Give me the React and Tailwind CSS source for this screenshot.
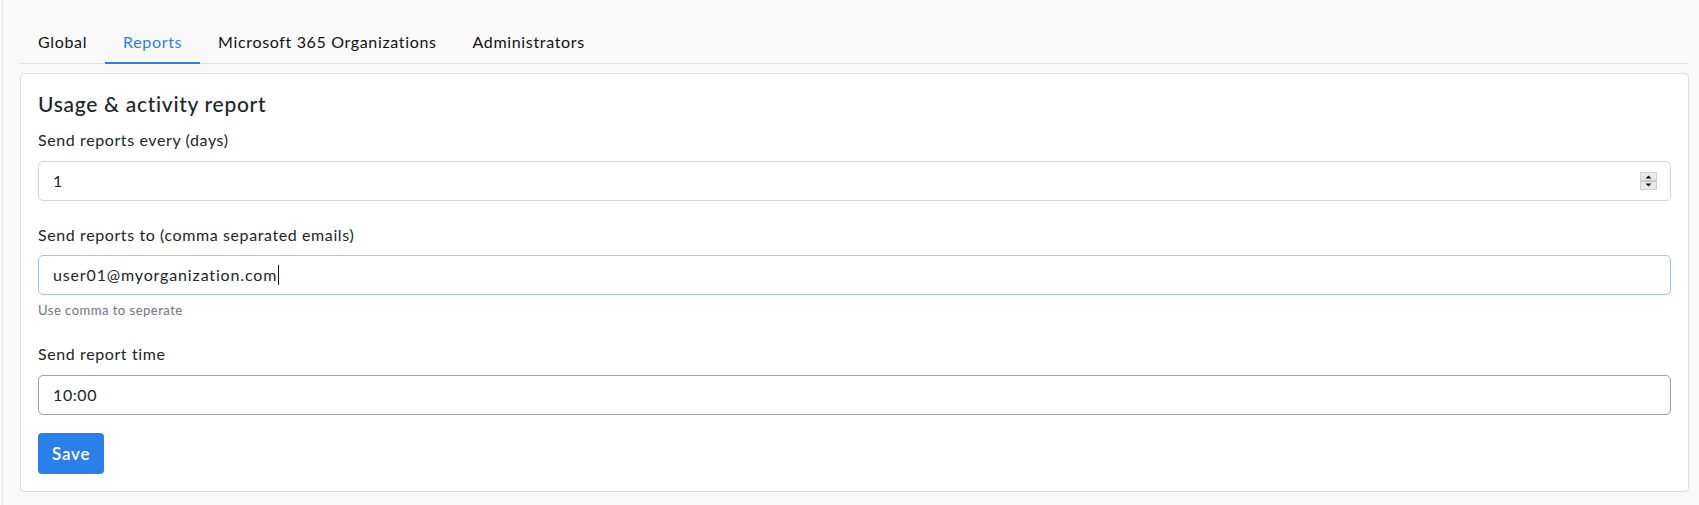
import { useState } from "react";

const TABS = ["Global", "Reports", "Microsoft 365 Organizations", "Administrators"];

function Spinner() {
  return (
    <svg width="17" height="18" viewBox="0 0 17 18" className="shrink-0">
      <rect x="0.5" y="0.5" width="16" height="17" fill="#e9e9e9" stroke="#cfcfcf" />
      <line x1="1" y1="9" x2="16" y2="9" stroke="#a9a9a9" />
      <path d="M5.5 6.5 L8.5 3.5 L11.5 6.5 Z" fill="#111" />
      <path d="M5.5 11.5 L8.5 14.5 L11.5 11.5 Z" fill="#111" />
    </svg>
  );
}

export default function App() {
  const [active, setActive] = useState("Reports");

  return (
    <div
      className="min-h-[505px] bg-[#f9f9f9] pl-[2px] text-[#212529]"
      style={{ fontFamily: "Lato, 'Open Sans', sans-serif" }}
    >
      <div className="min-h-[505px] border-l border-[#e4e4e4] pl-[17px] pr-[10px]">
        {/* Tabs */}
        <div className="flex pt-[20px] border-b border-[#e2e2e2]">
          {TABS.map((t) => (
            <button
              key={t}
              onClick={() => setActive(t)}
              className={
                active === t
                  ? "px-[18px] pt-[10px] pb-[8px] text-base leading-6 tracking-[0.65px] border-b-2 border-[#2b7fe8] -mb-px text-[#2b7fe8]"
                  : "px-[18px] pt-[10px] pb-[8px] text-base leading-6 tracking-[0.65px] border-b-2 border-transparent -mb-px text-[#111]"
              }
            >
              {t}
            </button>
          ))}
        </div>

        {/* Card */}
        <div className="mt-[9px] bg-white border border-[#dedede] rounded-[4px] pt-[18px] px-[17px] pb-[17px] tracking-[0.6px]">
          <h5 className="text-[21px] leading-6 font-medium tracking-[0.7px] text-[#212529] mb-[12px]">
            Usage &amp; activity report
          </h5>

          <label className="block text-base leading-6 mb-[9px]">Send reports every (days)</label>
          <div className="flex items-center justify-between h-10 border border-[#d2d5d9] rounded-[5px] pl-[14px] pr-[13px] text-base text-[#212529]">
            <span>1</span>
            <Spinner />
          </div>

          <label className="block text-base leading-6 mt-[22px] mb-2">
            Send reports to (comma separated emails)
          </label>
          <div className="flex items-center h-10 border border-[#9ec3f5] rounded-[5px] pl-[14px] text-base tracking-[0.85px] text-[#212529]">
            <span>user01@myorganization.com</span>
            <span className="w-px h-[20px] bg-[#111] ml-px" />
          </div>
          <div className="mt-[5px] text-[13px] leading-[21px] tracking-[0.5px] text-[#6c757d]">
            Use comma to seperate
          </div>

          <label className="block text-base leading-6 mt-[21px] mb-[9px]">Send report time</label>
          <div className="flex items-center h-10 border border-[#a0a0a0] rounded-[5px] pl-[14px] text-base text-[#212529]">
            <span>10:00</span>
          </div>

          <button className="mt-[18px] h-[41px] px-[14px] rounded-[4px] bg-[#2b7fe8] text-white text-[17px] font-semibold tracking-[0.8px]">
            Save
          </button>
        </div>
      </div>
    </div>
  );
}
